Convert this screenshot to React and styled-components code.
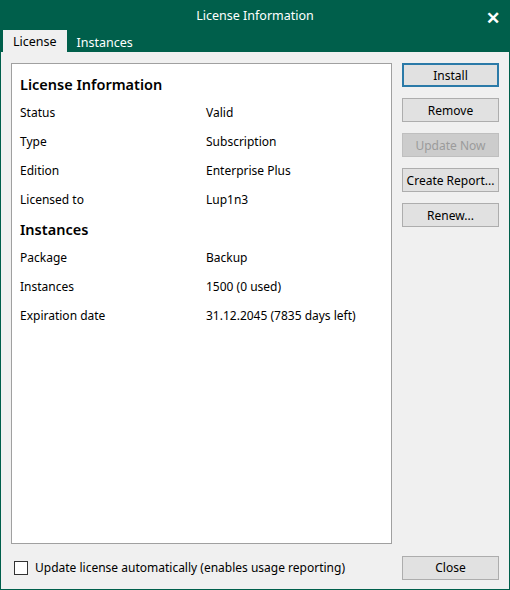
import React from 'react'
import styled, { createGlobalStyle } from 'styled-components'

const Global = createGlobalStyle`
  html, body { margin: 0; padding: 0; }
  body { font-family: "Noto Sans", "Open Sans", sans-serif; font-size: 12px; color: #000; }
`

const Window = styled.div`
  width: 510px;
  height: 590px;
  box-sizing: border-box;
  background: #005f4b;
  border: 1px solid #005f4b;
  display: flex;
  flex-direction: column;
`

const TitleBar = styled.div`
  height: 29px;
  display: flex;
  align-items: center;
  justify-content: center;
  position: relative;
  color: #fff;
  font-size: 12.5px;
`

const CloseX = styled.span`
  position: absolute;
  right: 9px;
  top: 5px;
  font-size: 17px;
  font-weight: bold;
`

const Tabs = styled.div`
  height: 22px;
  display: flex;
  align-items: flex-end;
  padding-left: 2px;
`

const Tab = styled.div`
  height: ${({ $active }) => ($active ? '22px' : '20px')};
  padding: 0 10px;
  display: flex;
  align-items: center;
  font-size: 12.5px;
  background: ${({ $active }) => ($active ? '#f0f0f0' : 'transparent')};
  color: ${({ $active }) => ($active ? '#000' : '#fff')};
`

const Body = styled.div`
  flex: 1;
  background: #f0f0f0;
  display: grid;
  grid-template-columns: 381px 97px;
  grid-template-rows: 481px 1fr;
  column-gap: 10px;
  padding: 11px 10px 0 10px;
`

const Panel = styled.div`
  background: #fff;
  border: 1px solid #a0a0a0;
  padding: 5px 8px;
  box-sizing: border-box;
`

const Heading = styled.div`
  font-size: 14.5px;
  font-weight: 600;
  height: 29px;
  display: flex;
  align-items: center;
  margin-top: ${({ $top }) => $top || 0}px;
`

const Row = styled.div`
  display: grid;
  grid-template-columns: 186px 1fr;
  height: 29px;
  align-items: center;
`

const Buttons = styled.div`
  display: flex;
  flex-direction: column;
  gap: 11px;
`

const Button = styled.div`
  height: 24px;
  box-sizing: border-box;
  display: flex;
  align-items: center;
  justify-content: center;
  background: ${({ $disabled }) => ($disabled ? '#cccccc' : '#e1e1e1')};
  color: ${({ $disabled }) => ($disabled ? '#9b9b9b' : '#000')};
  border: ${({ $primary, $disabled }) =>
    $primary ? '2px solid #2b7aa8' : $disabled ? '1px solid #bfbfbf' : '1px solid #adadad'};
`

const Footer = styled.div`
  display: flex;
  align-items: center;
  gap: 7px;
  padding-left: 3px;
  margin-top: 2px;
`

const Check = styled.span`
  width: 12px;
  height: 12px;
  border: 1px solid #333;
  background: #fff;
`

const FooterBtn = styled(Button)`
  align-self: center;
  margin-top: 2px;
`

const info = [
  ['Status', 'Valid'],
  ['Type', 'Subscription'],
  ['Edition', 'Enterprise Plus'],
  ['Licensed to', 'Lup1n3'],
]
const inst = [
  ['Package', 'Backup'],
  ['Instances', '1500 (0 used)'],
  ['Expiration date', '31.12.2045 (7835 days left)'],
]

export default function App() {
  return (
    <>
      <Global />
      <Window>
        <TitleBar>
          License Information
          <CloseX>✕</CloseX>
        </TitleBar>
        <Tabs>
          <Tab $active>License</Tab>
          <Tab>Instances</Tab>
        </Tabs>
        <Body>
          <Panel>
            <Heading>License Information</Heading>
            {info.map(([k, v]) => (
              <Row key={k}><span>{k}</span><span>{v}</span></Row>
            ))}
            <Heading>Instances</Heading>
            {inst.map(([k, v]) => (
              <Row key={k}><span>{k}</span><span>{v}</span></Row>
            ))}
          </Panel>
          <Buttons>
            <Button $primary>Install</Button>
            <Button>Remove</Button>
            <Button $disabled>Update Now</Button>
            <Button>Create Report...</Button>
            <Button>Renew...</Button>
          </Buttons>
          <Footer>
            <Check />
            <span>Update license automatically (enables usage reporting)</span>
          </Footer>
          <FooterBtn>Close</FooterBtn>
        </Body>
      </Window>
    </>
  )
}
